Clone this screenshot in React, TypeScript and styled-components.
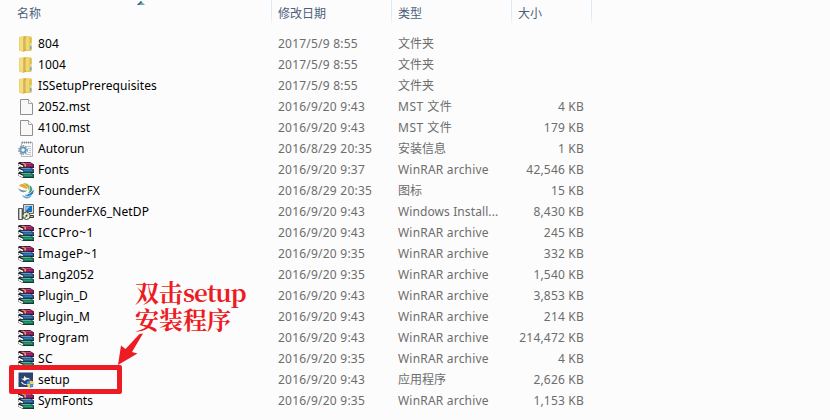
import React from "react";
import styled, { createGlobalStyle } from "styled-components";

const GlobalStyle = createGlobalStyle`
  * { box-sizing: border-box; }
  html, body { margin: 0; padding: 0; background: #fcfcfc; }
  body { overflow: hidden; }
`;

const Explorer = styled.main`
  position: relative;
  width: 830px;
  height: 420px;
  overflow: hidden;
  background: #fcfcfc;
  font-family: "Noto Sans", "Noto Sans CJK SC", sans-serif;
  font-size: 12px;
  color: #6d6d6d;
`;

const HeaderRow = styled.header`
  position: relative;
  display: grid;
  grid-template-columns: 272px 120px 120px 80px;
  height: 33px;
`;

const HeaderCell = styled.div<{ $indent: number }>`
  padding-left: ${(p) => p.$indent}px;
  height: 24px;
  line-height: 28px;
  color: #4c607a;
  border-right: 1px solid;
  border-image: linear-gradient(#dfe9f4 60%, #f6f9fc) 1;
`;

const SortMark = styled.svg`
  position: absolute;
  left: 137px;
  top: 1px;
`;

const FileRow = styled.div`
  display: grid;
  grid-template-columns: 260px 120px 112px 74px;
  height: 21px;
  line-height: 21px;
  padding-left: 18px;
  white-space: nowrap;
`;

const NameCell = styled.div`
  display: flex;
  align-items: center;
  gap: 4px;
  color: #000;
`;

const FileName = styled.span<{ $spacing: number }>`
  letter-spacing: ${(p) => p.$spacing}px;
`;

const DateCell = styled.div`
  letter-spacing: 0.22px;
`;

const TypeCell = styled.div<{ $spacing: number }>`
  letter-spacing: ${(p) => p.$spacing}px;
`;

const SizeCell = styled.div`
  text-align: right;
  letter-spacing: 0.2px;
`;

const Icon = styled.svg`
  flex: none;
  width: 16px;
  height: 16px;
`;

const SetupFrame = styled.div`
  position: absolute;
  left: 9px;
  top: 365px;
  width: 113px;
  height: 29px;
  border: 5px solid #ed1c24;
  border-radius: 2px;
`;

const Note = styled.div`
  position: absolute;
  left: 135px;
  top: 278px;
  color: #ed1c24;
  font: 700 24px/27px "Noto Serif CJK SC", "Liberation Serif", "Noto Sans CJK SC", serif;
  white-space: nowrap;
`;

const NoteLatin = styled.span`
  letter-spacing: -0.9px;
`;

const Arrow = styled.svg`
  position: absolute;
  left: 114px;
  top: 328px;
`;

type Kind = "folder" | "blank" | "config" | "rar" | "swirl" | "installer" | "setup";

const bookColors = [
  { light: "#c2418a", base: "#8d1458", y: 0 },
  { light: "#5b9bd0", base: "#1c5a9c", y: 5 },
  { light: "#4dbb93", base: "#14795a", y: 10 },
];

function FileIcon({ kind }: { kind: Kind }) {
  switch (kind) {
    case "folder":
      return (
        <Icon viewBox="0 0 16 16">
          <path d="M1 1l6-1 6 .5.8 1V14l-1 1H7l-1 1-5-1.500z" fill="#e6c65c" />
          <path d="M1.300 1.200L5.500.8V15l-4.200-.8z" fill="#f1dd83" />
          <path d="M5.500 1.500L8 .6V14l-2.500 1.600z" fill="#cfa63a" />
          <path d="M6.500 2.500L8 1.500V13l-1.500 1z" fill="#e0c25f" />
          <path d="M8 1h3.500v13H8z" fill="#efd776" />
          <path d="M11.500 1.500h2V14h-2z" fill="#e0bc50" />
          <path d="M12.500 7h1v6h-1z" fill="#f5efd0" />
          <path d="M12.200 10h1.200v3h-1.200z" fill="#43a5dd" />
        </Icon>
      );
    case "blank":
      return (
        <Icon viewBox="0 0 16 16">
          <path d="M2.500.5h8l4 4v11h-12z" fill="#f8f8f8" stroke="#8f8f8f" />
          <path d="M10.500.5v4h4" fill="#fff" stroke="#a4a4a4" />
        </Icon>
      );
    case "config":
      return (
        <Icon viewBox="0 0 16 16">
          <path d="M3.500 1.500h11v14h-11z" fill="#f7f9fa" stroke="#b3babf" />
          <path d="M4 1.500h10" stroke="#7f8b93" strokeWidth="2" strokeDasharray="1 1" />
          <path d="M9 5.500h4M10 7.500h3M11 9.500h2M10 11.500h3M8 13.500h5" stroke="#b9c6cf" />
          <circle cx="5" cy="9" r="4.200" fill="none" stroke="#7d9fb9" strokeWidth="1.600" strokeDasharray="1.600 1.100" />
          <circle cx="5" cy="9" r="2.700" fill="#eef5fa" stroke="#6a93b3" strokeWidth="1.800" />
        </Icon>
      );
    case "rar":
      return (
        <Icon viewBox="0 0 16 16">
          {bookColors.map((b) => (
            <g key={b.base} transform={`translate(0 ${b.y})`}>
              <path d="M0 1L1.500 0H12l4 2.500V6H5L0 3.500z" fill="#1a1018" />
              <path d="M1.500 .8H12l3.700 1.800H5z" fill={b.light} />
              <path d="M5 2.400h10.700v3H5z" fill={b.base} />
              <path d="M6 3.300h8" stroke={b.light} strokeWidth=".6" />
              <path d="M.3 1.500L5 3.700v1.700L.3 3.400z" fill="#fff" />
            </g>
          ))}
          <path d="M3.500.8h2L8 2.600v2H6.500v-2z" fill="#d9b93f" />
        </Icon>
      );
    case "swirl":
      return (
        <Icon viewBox="0 0 16 16">
          <path d="M1 2.500C4-.5 8.500 1 9.500 6.500 6.500 5 3 4 1 2.500z" fill="#efa52e" />
          <path d="M5 .5c5-1 8 2.500 6 7C9.800 4.500 8 2 5 .5z" fill="#a5b947" />
          <path d="M11.500 2c4 2.500 4 7-1.500 8.500 2-3 2.500-5 1.500-8.500z" fill="#4f9f83" />
          <path d="M15.500 6.500c1 5.500-4 8-9 5.500 4.500-.3 7.500-2.500 9-5.500z" fill="#2c7fbe" />
          <path d="M14 12.500c-3 4.500-8.500 3.500-10-.5 3.500 2 7 2 10 .5z" fill="#58a9d8" />
          <path d="M0 5c2 2 5 2.500 9 2.500C7 10.500 1.500 9.500 0 5z" fill="#7793a0" />
        </Icon>
      );
    case "installer":
      return (
        <Icon viewBox="0 0 16 16">
          <path d="M5.500.5h10v9h-10z" fill="#dcdcd8" stroke="#666" />
          <path d="M7.500 2h6.500v6H7.500z" fill="#1f6fc4" />
          <path d="M8 2.500h4L8 6.500z" fill="#86cdf0" />
          <path d="M.5 4.500h4v11h-4z" fill="#b9b9b4" stroke="#555" />
          <path d="M2.500 5v10" stroke="#f4f4f4" />
          <path d="M10 11.500h5.500v2H10z" fill="#c9c9c4" stroke="#333" />
          <circle cx="8.500" cy="11.800" r="3.700" fill="#eef1ea" stroke="#444" />
          <path d="M8.500 11.800V8.500l3 1.500z" fill="#e4d940" />
          <path d="M8.500 11.800l-3 1.700 2 1.500z" fill="#62bd65" />
          <circle cx="8.500" cy="11.800" r="1" fill="#333" />
        </Icon>
      );
    case "setup":
      return (
        <Icon viewBox="0 0 16 16">
          <path d="M.5.500h14.500v14.500H.5z" fill="#2a4472" />
          <path d="M3 6.500l2.500.3 1-3 1.500 2c2.500-.3 4 .7 4.200 2-2-.8-3.500-.6-4.500.4L6.500 9z" fill="#f2f5fa" />
          <path d="M3.500 10c1 2.300 3 2.800 5 2.300" stroke="#e3eaf2" strokeWidth="1.200" fill="none" />
          <path d="M9 9.500l3-1V12H9z" fill="#4c92d9" />
          <path d="M12 8.500l3.500 1V12H12z" fill="#f3d257" />
          <path d="M9 12h3v4c-2-.6-3-2-3-4z" fill="#f3d257" />
          <path d="M12 12h3.500c0 2-1.500 3.400-3.500 4z" fill="#4c92d9" />
        </Icon>
      );
  }
}

type Entry = { name: string; kind: Kind; date: string; type: string; size?: string; spacing?: number };

const files: Entry[] = [
  { name: "804", kind: "folder", date: "2017/5/9 8:55", type: "文件夹", spacing: 0.15 },
  { name: "1004", kind: "folder", date: "2017/5/9 8:55", type: "文件夹", spacing: 0.1 },
  { name: "ISSetupPrerequisites", kind: "folder", date: "2017/5/9 8:55", type: "文件夹", spacing: 0.1 },
  { name: "2052.mst", kind: "blank", date: "2016/9/20 9:43", type: "MST 文件", size: "4 KB" },
  { name: "4100.mst", kind: "blank", date: "2016/9/20 9:43", type: "MST 文件", size: "179 KB" },
  { name: "Autorun", kind: "config", date: "2016/8/29 20:35", type: "安装信息", size: "1 KB" },
  { name: "Fonts", kind: "rar", date: "2016/9/20 9:37", type: "WinRAR archive", size: "42,546 KB" },
  { name: "FounderFX", kind: "swirl", date: "2016/8/29 20:35", type: "图标", size: "15 KB", spacing: 0.15 },
  { name: "FounderFX6_NetDP", kind: "installer", date: "2016/9/20 9:43", type: "Windows Install...", size: "8,430 KB", spacing: 0.12 },
  { name: "ICCPro~1", kind: "rar", date: "2016/9/20 9:43", type: "WinRAR archive", size: "245 KB", spacing: 0.5 },
  { name: "ImageP~1", kind: "rar", date: "2016/9/20 9:35", type: "WinRAR archive", size: "332 KB", spacing: 0.38 },
  { name: "Lang2052", kind: "rar", date: "2016/9/20 9:35", type: "WinRAR archive", size: "1,540 KB", spacing: 0.08 },
  { name: "Plugin_D", kind: "rar", date: "2016/9/20 9:43", type: "WinRAR archive", size: "3,853 KB" },
  { name: "Plugin_M", kind: "rar", date: "2016/9/20 9:43", type: "WinRAR archive", size: "214 KB" },
  { name: "Program", kind: "rar", date: "2016/9/20 9:43", type: "WinRAR archive", size: "214,472 KB", spacing: 0.25 },
  { name: "SC", kind: "rar", date: "2016/9/20 9:35", type: "WinRAR archive", size: "4 KB", spacing: 0.4 },
  { name: "setup", kind: "setup", date: "2016/9/20 9:43", type: "应用程序", size: "2,626 KB" },
  { name: "SymFonts", kind: "rar", date: "2016/9/20 9:35", type: "WinRAR archive", size: "1,153 KB" },
];

const typeSpacing = (type: string) => {
  if (type.startsWith("MST")) return 0.5;
  if (type.startsWith("WinRAR")) return 0.2;
  return type.startsWith("Windows") ? 0.1 : 0;
};

export default function App() {
  return (
    <Explorer>
      <GlobalStyle />
      <HeaderRow>
        <HeaderCell $indent={17}>名称</HeaderCell>
        <HeaderCell $indent={6}>修改日期</HeaderCell>
        <HeaderCell $indent={6}>类型</HeaderCell>
        <HeaderCell $indent={6}>大小</HeaderCell>
        <SortMark width="8" height="4" viewBox="0 0 8 4">
          <path d="M0 4l4-4 4 4z" fill="#6fa6c2" />
          <path d="M0 4l4-4 1 1-3 3z" fill="#3c5f74" />
        </SortMark>
      </HeaderRow>
      {files.map((f) => (
        <FileRow key={f.name}>
          <NameCell>
            <FileIcon kind={f.kind} />
            <FileName $spacing={f.spacing ?? 0}>{f.name}</FileName>
          </NameCell>
          <DateCell>{f.date}</DateCell>
          <TypeCell $spacing={typeSpacing(f.type)}>{f.type}</TypeCell>
          <SizeCell>{f.size}</SizeCell>
        </FileRow>
      ))}
      <SetupFrame />
      <Note>
        双击<NoteLatin>setup</NoteLatin>
        <br />
        安装程序
      </Note>
      <Arrow width="30" height="38" viewBox="0 0 30 38">
        <path d="M25.500 6L29 5.500 18 24l5.500 1.500L4 37 7 17.500l4.500 3.500z" fill="#ed1c24" />
      </Arrow>
    </Explorer>
  );
}
